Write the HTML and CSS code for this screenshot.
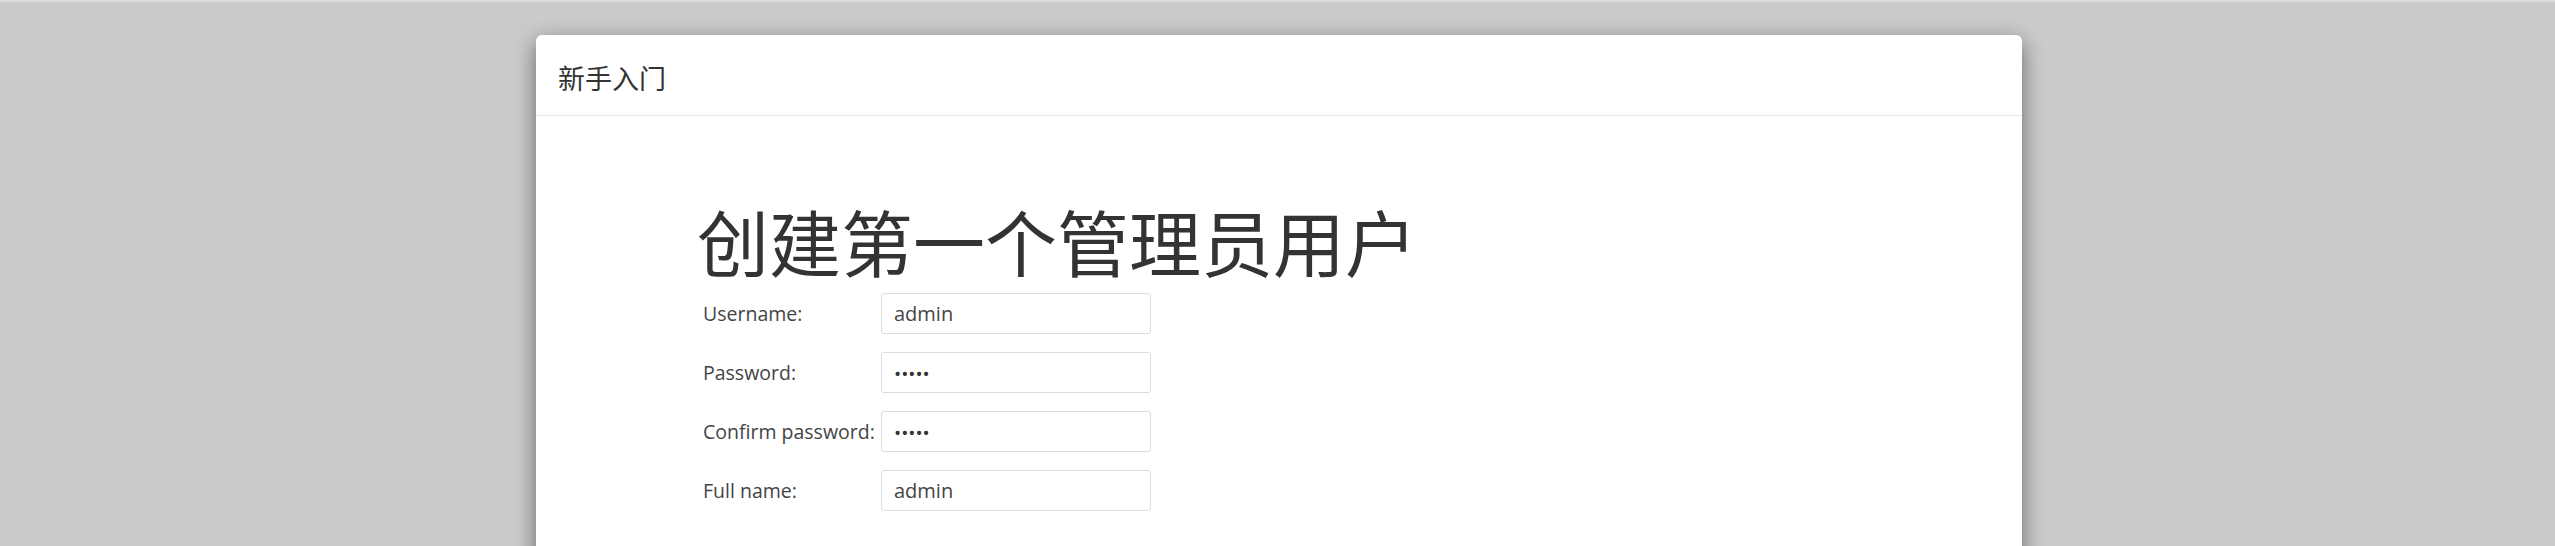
FILE: index.html
```html
<!DOCTYPE html>
<html lang="zh-CN">
<head>
<meta charset="utf-8">
<title>新手入门</title>
<link rel="stylesheet" href="styles.css">
</head>
<body>
<div class="topstrip"></div>
<div class="backdrop">
  <div class="modal">
    <div class="modal-header">
      <h4 class="modal-title">新手入门</h4>
    </div>
    <div class="modal-body">
      <h1 class="heading">创建第一个管理员用户</h1>
      <form class="form">
        <label class="label">Username:</label>
        <div class="field"><span class="value">admin</span></div>
        <label class="label">Password:</label>
        <div class="field"><span class="value dots">•••••</span></div>
        <label class="label">Confirm password:</label>
        <div class="field"><span class="value dots">•••••</span></div>
        <label class="label">Full name:</label>
        <div class="field"><span class="value">admin</span></div>
      </form>
    </div>
  </div>
</div>
</body>
</html>
```
FILE: styles.css
```css
html, body {
  margin: 0;
  padding: 0;
  height: 100%;
  overflow: hidden;
}
body {
  background: #cbcbcb;
  font-family: "Open Sans", "Noto Sans CJK SC", sans-serif;
  color: #333;
}
.topstrip {
  height: 2px;
  background: #dddddd;
}
.backdrop {
  padding-top: 33px;
}
.modal {
  margin-left: 536px;
  width: 1486px;
  height: 560px;
  background: #fff;
  border-radius: 6px 6px 0 0;
  box-shadow: 0 7px 22px rgba(0, 0, 0, 0.5);
}
.modal-header {
  height: 80px;
  border-bottom: 1px solid #e5e5e5;
  padding: 0 22px;
  display: flex;
  align-items: center;
}
.modal-title {
  margin: 0;
  font-family: "Noto Sans CJK SC", sans-serif;
  font-weight: 400;
  font-size: 27px;
  color: #333;
  position: relative;
  top: 2px;
}
.modal-body {
  padding: 80px 0 0 161px;
}
.heading {
  margin: 0;
  font-family: "Noto Sans CJK SC", sans-serif;
  font-weight: 400;
  font-size: 72px;
  line-height: 88px;
  color: #333;
}
.form {
  display: grid;
  grid-template-columns: 178px 270px;
  row-gap: 18px;
  margin-top: 9px;
  padding-left: 6px;
}
.label {
  font-size: 19.5px;
  line-height: 28px;
  color: #444;
  padding-top: 7px;
  white-space: nowrap;
}
.field {
  height: 39px;
  border: 1px solid #dcdcdc;
  border-radius: 3px;
  display: flex;
  align-items: center;
  padding: 0 12px;
}
.value {
  font-size: 20px;
  color: #444;
}
.dots {
  font-size: 19px;
  letter-spacing: 0;
  color: #333;
  position: relative;
  top: 1px;
}
```
